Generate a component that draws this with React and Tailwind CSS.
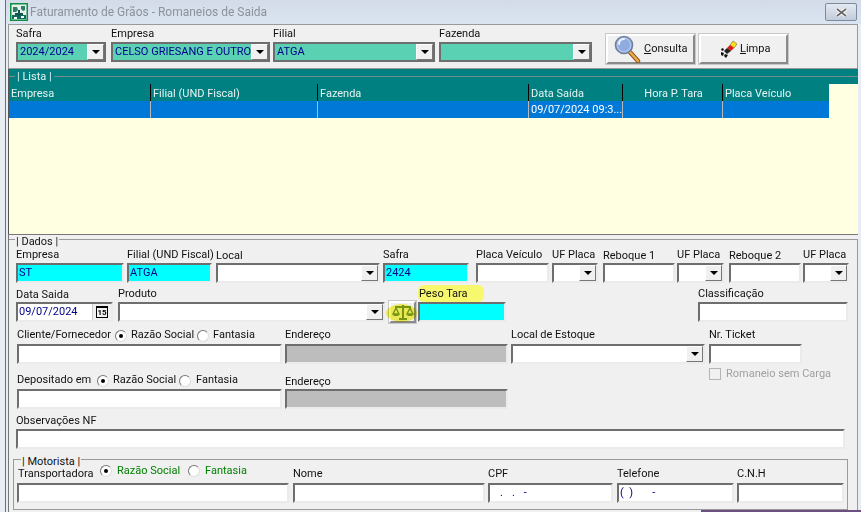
const sunken = "border-2 border-t-[#6e6e6e] border-l-[#6e6e6e] border-r-[#ebebeb] border-b-[#ebebeb]";
const comboEdge = "border-2 border-[#6e6e6e]";

const Label = ({ children, className = "" }) => (
  <div className={`h-[15px] leading-[13px] whitespace-nowrap text-[#111] ${className}`}>{children}</div>
);

const Arrow = () => (
  <div className="w-[17px] h-full shrink-0 flex items-center justify-center bg-[#f0f0f0] border border-t-white border-l-white border-r-[#777] border-b-[#777]">
    <svg width="8" height="4" viewBox="0 0 8 4"><path d="M0 0h8L4 4z" fill="#000" /></svg>
  </div>
);

const TextBox = ({ className = "", bg = "bg-white", children }) => (
  <div className={`h-[20px] ${sunken} ${bg} text-[#00008b] leading-[16px] pl-[1px] overflow-hidden whitespace-nowrap ${className}`}>
    {children}
  </div>
);

const Combo = ({ className = "", bg = "bg-white", edge = sunken, children }) => (
  <div className={`h-[20px] ${edge} ${bg} flex text-[#00008b] leading-[16px] ${className}`}>
    <div className="flex-1 pl-[2px] overflow-hidden whitespace-nowrap">{children}</div>
    <Arrow />
  </div>
);

const Radio = ({ checked, className = "" }) => (
  <span className={`inline-flex shrink-0 items-center justify-center w-[12px] h-[12px] rounded-full bg-white border border-t-[#777] border-l-[#777] border-r-[#ddd] border-b-[#ddd] ${className}`}>
    {checked && <span className="w-[4px] h-[4px] rounded-full bg-black" />}
  </span>
);

const Window3dBtn = ({ className = "", children }) => (
  <button className={`flex items-center bg-[#f0f0f0] border-2 border-t-white border-l-white border-r-[#8a8a8a] border-b-[#8a8a8a] outline outline-1 outline-[#c8c8c8] text-[#111] ${className}`}>
    {children}
  </button>
);

const AppIcon = () => (
  <svg width="18" height="18" viewBox="0 0 18 18">
    <rect x="0.75" y="0.75" width="16.5" height="16.5" fill="#e6efe8" stroke="#0c8f43" strokeWidth="1.5" />
    <path d="M2 12h14v4H2z" fill="#0f6b5c" />
    <path d="M3 4h4l1 3-2 2H3zM11 3h4v4l-2 1-2-2z" fill="#2f7d6b" />
    <path d="M8 7h2v6H8zM5 10h8v2H5z" fill="#14524a" />
    <path d="M4 14h3v2H4zM11 13h3v2h-3z" fill="#fff" />
  </svg>
);

const Magnifier = () => (
  <svg width="28" height="28" viewBox="0 0 28 28">
    <path d="M15 16l9 10" stroke="#8a5a1c" strokeWidth="4.5" strokeLinecap="round" />
    <path d="M15.5 16.5l8.5 9.5" stroke="#f0a84a" strokeWidth="2.5" strokeLinecap="round" />
    <circle cx="10" cy="10" r="8.5" fill="#a9c2ee" stroke="#6f7f9a" strokeWidth="1.6" />
    <circle cx="10" cy="10" r="6" fill="#8fabe0" />
    <path d="M5 9a5 5 0 0 1 5-5" stroke="#eef4ff" strokeWidth="2" fill="none" strokeLinecap="round" />
  </svg>
);

const Brush = () => (
  <svg width="18" height="18" viewBox="0 0 18 18">
    <path d="M13 1l4 3-3 4-4-3z" fill="#f4e020" stroke="#7a6a10" strokeWidth="0.6" />
    <path d="M10 5l4 3-3 3-4-3z" fill="#e01818" />
    <path d="M7 8l4 3-4 3-3-3z" fill="#222" />
    <path d="M1 12l3 1-1 3-2-1zM5 14l3 1-2 3-2-2zM2 8l2 1-1 2-2-1z" fill="#111" />
  </svg>
);

const Scale = () => (
  <svg width="22" height="16" viewBox="0 0 22 16" fill="none" stroke="#7d9a2e" strokeWidth="1.4">
    <path d="M3 3h16M11 1v13M7 15h8" strokeWidth="2" />
    <path d="M4 4l-3 6h6zM18 4l-3 6h6z" />
    <path d="M1.5 11h5M15.5 11h5" strokeWidth="2" />
  </svg>
);

const ListCell = ({ className = "", children }) => (
  <div className={`h-full shrink-0 pl-[2px] overflow-hidden whitespace-nowrap ${className}`}>{children}</div>
);

const RadioPair = ({ className = "", color = "", first = "ml-[4px] w-[66px]", second = "ml-[4px]" }) => (
  <div className={`flex items-center ${color} ${className}`}>
    <Radio checked />
    <span className={first}>Razão Social</span>
    <Radio />
    <span className={second}>Fantasia</span>
  </div>
);

export default function App() {
  return (
    <div className="relative w-[861px] h-[512px] overflow-hidden flex bg-[#e8edf3] pl-[5px] text-[11px] font-['Roboto',Arial,sans-serif]">
      <div className="flex-1 min-w-0 flex flex-col border-l border-[#6f6f6f]">
        {/* barra de titulo */}
        <div className="h-[24px] shrink-0 flex items-center pl-[4px] pr-[4px] bg-gradient-to-b from-[#d2dbe7] to-[#dbe5f1]">
          <AppIcon />
          <span className="ml-[2px] text-[12px] text-[#8b939c]">Faturamento de Grãos - Romaneios de Saida</span>
          <div className="ml-auto w-[32px] h-[18px] flex items-center justify-center rounded-[2px] border border-[#7c8aa0] bg-gradient-to-b from-[#e4e9f1] to-[#c2ccda]">
            <svg width="11" height="9" viewBox="0 0 11 9"><path d="M1 1l9 7M10 1l-9 7" stroke="#fff" strokeWidth="3.4" /><path d="M1 1l9 7M10 1l-9 7" stroke="#666" strokeWidth="1.6" /></svg>
          </div>
        </div>

        <div className="flex-1 flex flex-col ml-[2px] mr-[3px] min-h-0">
          {/* filtros */}
          <div className="h-[45px] shrink-0 border border-[#9a9a9a] bg-[#f0f0f0] flex pl-[7px] pt-[2px]">
            <div className="w-[90px]">
              <Label>Safra</Label>
              <Combo className="w-full" bg="bg-[#5ad1b3]" edge={comboEdge}>2024/2024</Combo>
            </div>
            <div className="w-[159px] ml-[5px]">
              <Label>Empresa</Label>
              <Combo className="w-full" bg="bg-[#5ad1b3]" edge={comboEdge}>CELSO GRIESANG E OUTRO</Combo>
            </div>
            <div className="w-[162px] ml-[3px]">
              <Label>Filial</Label>
              <Combo className="w-full" bg="bg-[#5ad1b3]" edge={comboEdge}>ATGA</Combo>
            </div>
            <div className="w-[153px] ml-[4px]">
              <Label>Fazenda</Label>
              <Combo className="w-full" bg="bg-[#5ad1b3]" edge={comboEdge} />
            </div>
            <Window3dBtn className="w-[89px] h-[30px] mt-[7px] ml-[14px] pl-[6px]">
              <Magnifier />
              <span className="ml-[2px]"><u>C</u>onsulta</span>
            </Window3dBtn>
            <Window3dBtn className="w-[89px] h-[30px] mt-[7px] ml-[4px] pl-[19px]">
              <Brush />
              <span className="ml-[2px]"><u>L</u>impa</span>
            </Window3dBtn>
          </div>

          {/* lista */}
          <div className="h-[165px] shrink-0 flex flex-col bg-[#ffffe1] border-l border-[#555]">
            <div className="h-[15px] shrink-0 bg-[#008080] flex items-center text-[#e6f2f2]">
              <div className="w-[6px] h-px bg-[#6f8f8f]" />
              <span className="px-[2px] pt-[2px]">| Lista |</span>
              <div className="flex-1 h-px bg-[#6f8f8f]" />
            </div>
            <div className="h-[17px] shrink-0 w-[820px] flex bg-[#008080] text-[#e6f2f2] leading-[19px]">
              <ListCell className="w-[142px] border-r border-black">Empresa</ListCell>
              <ListCell className="w-[167px] border-r border-black">Filial (UND Fiscal)</ListCell>
              <ListCell className="w-[211px] border-r border-black">Fazenda</ListCell>
              <ListCell className="w-[94px] border-r border-black">Data Saída</ListCell>
              <ListCell className="w-[100px] border-r border-black text-center">Hora P. Tara</ListCell>
              <ListCell className="w-[106px]">Placa Veículo</ListCell>
            </div>
            <div className="h-[17px] shrink-0 w-[820px] flex bg-[#0078d7] text-white leading-[17px]">
              <ListCell className="w-[142px] border-r border-[#b8b8b8]" />
              <ListCell className="w-[167px] border-r border-[#b8b8b8]" />
              <ListCell className="w-[211px] border-r border-[#b8b8b8]" />
              <ListCell className="w-[94px] border-r border-[#b8b8b8]">09/07/2024 09:3...</ListCell>
              <ListCell className="w-[100px] border-r border-[#b8b8b8]" />
              <ListCell className="w-[106px]" />
            </div>
          </div>

          {/* dados */}
          <div className="flex-1 bg-[#f0f0f0] border-l border-t border-[#777] pt-[4px]">
            <div className="relative h-[300px] border-t border-r border-[#9a9a9a] pt-[8px] pl-[1px]">
              <span className="absolute left-[6px] top-[-5px] px-px leading-[13px] bg-[#f0f0f0] text-[#111]">| Dados |</span>

              <div className="flex pl-[6px]">
                <div className="w-[108px]"><Label>Empresa</Label><TextBox bg="bg-[#00ffff]">ST</TextBox></div>
                <div className="w-[85px] ml-[3px]"><Label>Filial (UND Fiscal)</Label><TextBox bg="bg-[#00ffff]">ATGA</TextBox></div>
                <div className="w-[164px] ml-[4px]"><Label className="pt-[1px]">Local</Label><Combo /></div>
                <div className="w-[86px] ml-[3px]"><Label>Safra</Label><TextBox bg="bg-[#00ffff]">2424</TextBox></div>
                <div className="w-[73px] ml-[7px]"><Label>Placa Veículo</Label><TextBox /></div>
                <div className="w-[46px] ml-[3px]"><Label>UF Placa</Label><Combo /></div>
                <div className="w-[72px] ml-[5px]"><Label className="pt-[1px]">Reboque 1</Label><TextBox /></div>
                <div className="w-[47px] ml-[2px]"><Label>UF Placa</Label><Combo /></div>
                <div className="w-[72px] ml-[5px]"><Label className="pt-[1px]">Reboque 2</Label><TextBox /></div>
                <div className="w-[46px] ml-[2px]"><Label>UF Placa</Label><Combo /></div>
              </div>

              <div className="flex pl-[6px] mt-[4px]">
                <div className="w-[97px]">
                  <Label className="pt-[1px]">Data Saida</Label>
                  <div className={`h-[20px] ${sunken} bg-white flex text-[#00008b] leading-[16px] pl-[1px]`}>
                    <span className="flex-1">09/07/2024</span>
                    <div className="w-[19px] flex items-center justify-center bg-[#f0f0f0] border-l border-[#ccc]">
                      <span className="w-[12px] h-[12px] border border-black border-t-2 text-[8px] leading-[9px] text-center text-black font-bold">15</span>
                    </div>
                  </div>
                </div>
                <div className="w-[267px] ml-[5px]"><Label>Produto</Label><Combo /></div>
                <div className="relative ml-[4px] mt-[14px]">
                  <Window3dBtn className="w-[27px] h-[22px] justify-center">
                    <Scale />
                  </Window3dBtn>
                  <div className="absolute left-[-3px] top-[3px] w-[31px] h-[18px] rounded-[50%] bg-[#f6f65c] mix-blend-multiply" />
                </div>
                <div className="w-[88px] ml-[2px]">
                  <Label className="w-[66px] h-[17px] mt-[-2px] pt-[2px] rounded-[6px] bg-[#f8f86e] text-[#7c7c20] pl-px">Peso Tara</Label>
                  <TextBox bg="bg-[#00ffff]" />
                </div>
                <div className="w-[150px] ml-[192px]"><Label>Classificação</Label><TextBox /></div>
              </div>

              <div className="flex pl-[7px] mt-[6px]">
                <div className="w-[491px]">
                  <div className="flex">
                    <div className="w-[265px]">
                      <div className="h-[15px] pb-[2px] flex items-center text-[#111]">
                        <span className="w-[98px]">Cliente/Fornecedor</span>
                        <RadioPair />
                      </div>
                      <TextBox />
                    </div>
                    <div className="w-[223px] ml-[3px]">
                      <Label className="h-[16px] mt-[-1px]">Endereço</Label>
                      <TextBox bg="bg-[#bdbdbd]" />
                    </div>
                  </div>
                  <div className="flex mt-[10px]">
                    <div className="w-[265px]">
                      <div className="h-[15px] pb-[2px] flex items-center text-[#111]">
                        <span className="w-[80px]">Depositado em</span>
                        <RadioPair second="ml-[5px]" />
                      </div>
                      <TextBox />
                    </div>
                    <div className="w-[223px] ml-[3px]">
                      <Label className="pt-[1px]">Endereço</Label>
                      <TextBox bg="bg-[#bdbdbd]" />
                    </div>
                  </div>
                </div>
                <div className="w-[194px] ml-[3px]"><Label className="h-[16px] mt-[-1px]">Local de Estoque</Label><Combo /></div>
                <div className="ml-[4px]">
                  <Label className="h-[16px] mt-[-1px]">Nr. Ticket</Label>
                  <TextBox className="w-[93px]" />
                  <div className="flex items-center mt-[2px] text-[#a0a0a0]">
                    <span className="w-[12px] h-[12px] border border-[#b5b5b5] bg-[#f0f0f0]" />
                    <span className="ml-[5px]">Romaneio sem Carga</span>
                  </div>
                </div>
              </div>

              <div className="pl-[6px] mt-[5px]">
                <Label>Observações NF</Label>
                <TextBox className="w-[829px]" />
              </div>

              {/* motorista */}
              <div className="relative ml-[3px] mt-[10px] w-[835px] h-[51px] border border-[#9a9a9a] pl-[3px] pt-[8px] flex">
                <span className="absolute left-[7px] top-[-5px] px-px leading-[13px] bg-[#f0f0f0] text-[#111]">| Motorista |</span>
                <div className="w-[272px]">
                  <div className="h-[15px] flex text-[#111]">
                    <span className="w-[83px] pl-px leading-[11px]">Transportadora</span>
                    <RadioPair className="h-[12px] mt-[-3px]" color="text-[#008000]" first="ml-[5px] w-[71px]" second="ml-[5px]" />
                  </div>
                  <TextBox />
                </div>
                <div className="w-[192px] ml-[4px]"><Label className="h-[16px] mt-[-1px]">Nome</Label><TextBox /></div>
                <div className="w-[125px] ml-[3px]"><Label className="h-[16px] mt-[-1px]">CPF</Label><TextBox className="pl-[10px] tracking-[9px]">..-</TextBox></div>
                <div className="w-[117px] ml-[4px]"><Label className="h-[16px] mt-[-1px]">Telefone</Label><TextBox className="whitespace-pre">{"(  )       -"}</TextBox></div>
                <div className="w-[107px] ml-[3px]"><Label className="h-[16px] mt-[-1px]">C.N.H</Label><TextBox /></div>
              </div>
            </div>
          </div>
        </div>
      </div>
      <div className="absolute right-0 bottom-0 w-[160px] h-[2px] bg-[#6b5080]" />
    </div>
  );
}
